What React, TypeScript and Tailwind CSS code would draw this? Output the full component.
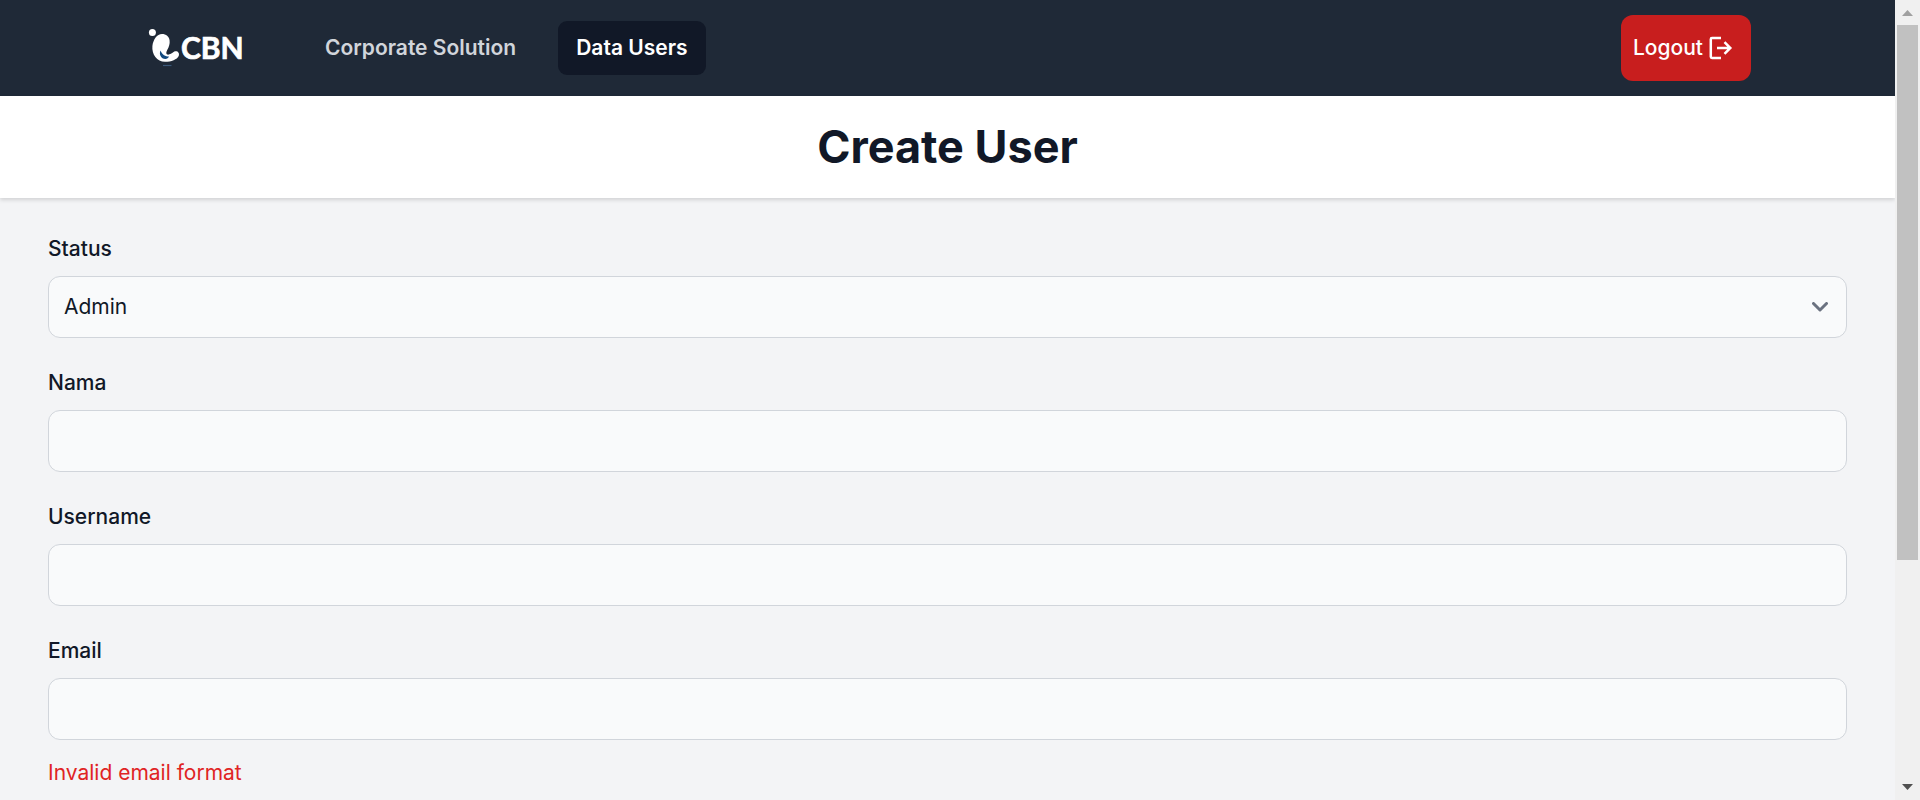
import { useState } from "react";

function Logo() {
  return (
    <svg viewBox="0 0 96 42" className="h-[42px] w-24" role="img" aria-label="CBN">
      <circle cx="4.4" cy="5.6" r="3.5" fill="#fff" />
      <path
        d="M14 7C9 7 5.2 12.5 4.4 19C3.6 27.5 9 34.8 17 34.8C23.5 34.8 29 32.5 30.7 29C32 25.6 29 23.2 26.3 24.6C23.5 26.4 21.2 28.2 19.2 27.6C17.8 26.9 18.2 25 19.2 23C21 19.8 22 16.8 21.6 13.4C21.2 9.6 18 7 14 7Z"
        fill="#fff"
      />
      <path d="M12.6 23.4C10.6 27 13 31.8 17.4 32C19 32 20.4 31 21 29.6C17.6 29.4 14 27.8 12.6 23.4Z" fill="#124a80" />
      <path d="M15 38.5H23.5" stroke="#3b5878" strokeWidth="1.2" />
      <text x="33" y="32" fill="#fff" stroke="#fff" strokeWidth="0.7" className="font-['Lato',sans-serif] text-[30px] font-bold">
        CBN
      </text>
    </svg>
  );
}

function LogoutIcon() {
  return (
    <svg viewBox="0 0 24 24" className="size-6" fill="none" stroke="#fff" strokeWidth="2.5" aria-hidden="true">
      <path d="M12 2H3Q1.8 2 1.8 3.2V20.8Q1.8 22 3 22H12" />
      <path d="M8 12H21.5M15.5 6.2L21.3 12L15.5 17.8" />
    </svg>
  );
}

const control =
  "block h-[62px] w-full appearance-none rounded-xl border border-[#d1d5db] bg-[#f9fafb] px-[15px] text-[21px] leading-[30px] text-[#111827]";

function Label({ id, children }: { id: string; children: string }) {
  return (
    <label htmlFor={id} className="mb-3 block text-[21px] leading-[30px] font-medium text-[#111827]">
      {children}
    </label>
  );
}

function TextField({ id, label, type = "text", error }: { id: string; label: string; type?: string; error?: string }) {
  const [value, setValue] = useState("");
  return (
    <div>
      <Label id={id}>{label}</Label>
      <input id={id} type={type} value={value} onChange={(e) => setValue(e.target.value)} className={control} />
      {error && <p className="mt-[18px] text-[21px] leading-[30px] text-[#e02424]">{error}</p>}
    </div>
  );
}

function Scrollbar() {
  return (
    <div className="flex w-[25px] shrink-0 flex-col items-center bg-[#f0f0f0]" aria-hidden="true">
      <svg viewBox="0 0 25 25" className="size-[25px]">
        <path d="M7 16L12.5 10L18 16Z" fill="#a0a0a0" />
      </svg>
      <div className="h-[535px] w-[21px] bg-[#c1c1c1]" />
      <svg viewBox="0 0 25 25" className="mt-auto size-[25px]">
        <path d="M7 9L12.5 15L18 9Z" fill="#505050" />
      </svg>
    </div>
  );
}

export default function App() {
  return (
    <div className="flex h-screen overflow-hidden font-['Inter',sans-serif]">
      <div className="min-w-0 flex-1 overflow-hidden bg-[#f3f4f6]">
        <nav className="flex h-24 items-center bg-[#1f2937] px-36 text-[21px] leading-[30px] font-semibold">
          <a href="#home" className="mr-[63px] ml-1">
            <Logo />
          </a>
          <div className="flex flex-1 gap-6">
            <a href="#corporate" className="rounded-[9px] px-[18px] py-3 text-[#d1d5db]">
              Corporate Solution
            </a>
            <a href="#users" aria-current="page" className="rounded-[9px] bg-[#111827] px-[18px] py-3 text-white">
              Data Users
            </a>
          </div>
          <button type="button" className="flex h-[66px] items-center gap-1.5 rounded-xl bg-[#c81e1e] pr-[18px] pl-3 font-medium text-white">
            Logout
            <LogoutIcon />
          </button>
        </nav>
        <header className="relative bg-white py-6 shadow-[0_2px_4px_rgba(0,0,0,0.14)]">
          <h1 className="text-center text-[45px] leading-[54px] font-bold text-[#111827]">Create User</h1>
        </header>
        <main className="px-12 py-9">
          <form className="flex flex-col gap-[30px]">
            <div>
              <Label id="status">Status</Label>
              <div className="relative">
                <select id="status" defaultValue="Admin" className={control}>
                  <option>Admin</option>
                  <option>User</option>
                </select>
                <svg
                  viewBox="0 0 16 10"
                  className="pointer-events-none absolute top-[26px] right-[19px] h-[10px] w-4"
                  fill="none"
                  stroke="#6b7280"
                  strokeWidth="3"
                  strokeLinecap="round"
                  strokeLinejoin="round"
                  aria-hidden="true"
                >
                  <path d="M1.5 1.5L8 8L14.5 1.5" />
                </svg>
              </div>
            </div>
            <TextField id="nama" label="Nama" />
            <TextField id="username" label="Username" />
            <TextField id="email" label="Email" type="email" error="Invalid email format" />
          </form>
        </main>
      </div>
      <Scrollbar />
    </div>
  );
}
